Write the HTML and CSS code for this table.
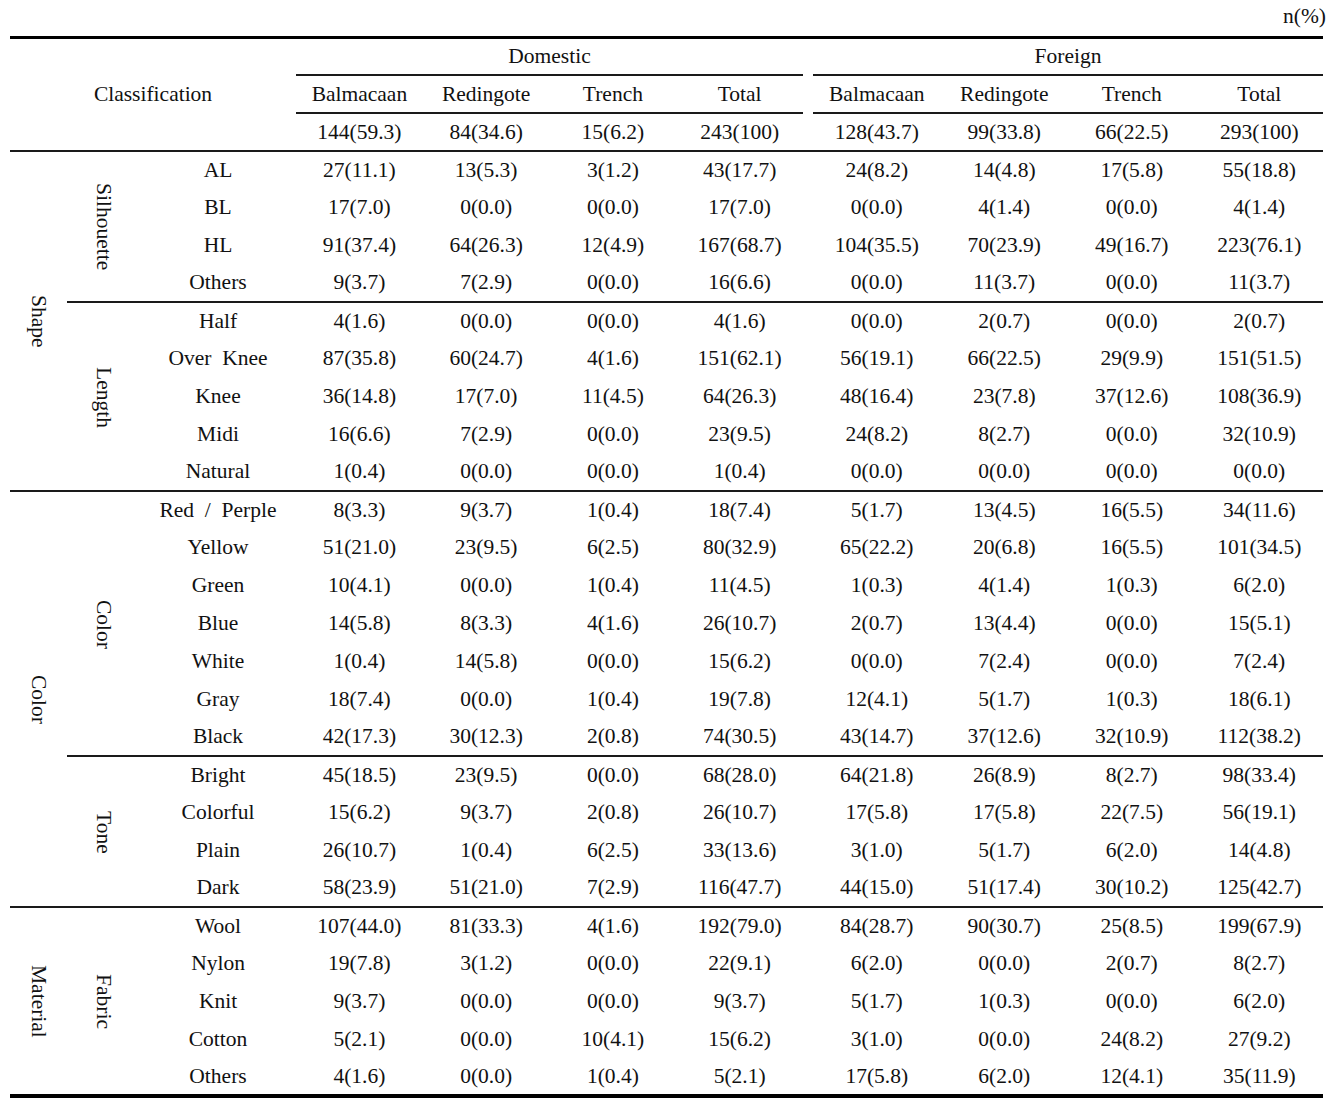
FILE: index.html
```html
<!DOCTYPE html>
<html>
<head>
<meta charset="utf-8">
<link rel="stylesheet" href="styles.css">
</head>
<body>
<div class="unit">n(%)</div>
<table class="tbl">
<colgroup>
<col class="c-grp"><col class="c-sub"><col class="c-item">
<col class="c-d"><col class="c-d"><col class="c-d"><col class="c-d">
<col class="c-gap">
<col class="c-f"><col class="c-f"><col class="c-f"><col class="c-f">
</colgroup>
<thead>
<tr>
<th colspan="3" rowspan="3" class="classif bline">Classification</th>
<th colspan="4" class="hline">Domestic</th>
<th class="gap"></th>
<th colspan="4" class="hline">Foreign</th>
</tr>
<tr>
<th class="hline">Balmacaan</th><th class="hline">Redingote</th><th class="hline">Trench</th><th class="hline">Total</th>
<th class="gap"></th>
<th class="hline">Balmacaan</th><th class="hline">Redingote</th><th class="hline">Trench</th><th class="hline">Total</th>
</tr>
<tr class="sec">
<td>144(59.3)</td><td>84(34.6)</td><td>15(6.2)</td><td>243(100)</td><td></td>
<td>128(43.7)</td><td>99(33.8)</td><td>66(22.5)</td><td>293(100)</td>
</tr>
</thead>
<tbody>
<tr>
<td rowspan="9" class="grp bline"><span class="vt">Shape</span></td>
<td rowspan="4" class="grp bline"><span class="vt">Silhouette</span></td>
<td>AL</td><td>27(11.1)</td><td>13(5.3)</td><td>3(1.2)</td><td>43(17.7)</td><td></td><td>24(8.2)</td><td>14(4.8)</td><td>17(5.8)</td><td>55(18.8)</td></tr>
<tr><td>BL</td><td>17(7.0)</td><td>0(0.0)</td><td>0(0.0)</td><td>17(7.0)</td><td></td><td>0(0.0)</td><td>4(1.4)</td><td>0(0.0)</td><td>4(1.4)</td></tr>
<tr><td>HL</td><td>91(37.4)</td><td>64(26.3)</td><td>12(4.9)</td><td>167(68.7)</td><td></td><td>104(35.5)</td><td>70(23.9)</td><td>49(16.7)</td><td>223(76.1)</td></tr>
<tr class="sec"><td>Others</td><td>9(3.7)</td><td>7(2.9)</td><td>0(0.0)</td><td>16(6.6)</td><td></td><td>0(0.0)</td><td>11(3.7)</td><td>0(0.0)</td><td>11(3.7)</td></tr>
<tr>
<td rowspan="5" class="grp bline"><span class="vt">Length</span></td>
<td>Half</td><td>4(1.6)</td><td>0(0.0)</td><td>0(0.0)</td><td>4(1.6)</td><td></td><td>0(0.0)</td><td>2(0.7)</td><td>0(0.0)</td><td>2(0.7)</td></tr>
<tr><td>Over&nbsp;&nbsp;Knee</td><td>87(35.8)</td><td>60(24.7)</td><td>4(1.6)</td><td>151(62.1)</td><td></td><td>56(19.1)</td><td>66(22.5)</td><td>29(9.9)</td><td>151(51.5)</td></tr>
<tr><td>Knee</td><td>36(14.8)</td><td>17(7.0)</td><td>11(4.5)</td><td>64(26.3)</td><td></td><td>48(16.4)</td><td>23(7.8)</td><td>37(12.6)</td><td>108(36.9)</td></tr>
<tr><td>Midi</td><td>16(6.6)</td><td>7(2.9)</td><td>0(0.0)</td><td>23(9.5)</td><td></td><td>24(8.2)</td><td>8(2.7)</td><td>0(0.0)</td><td>32(10.9)</td></tr>
<tr class="sec"><td>Natural</td><td>1(0.4)</td><td>0(0.0)</td><td>0(0.0)</td><td>1(0.4)</td><td></td><td>0(0.0)</td><td>0(0.0)</td><td>0(0.0)</td><td>0(0.0)</td></tr>
<tr>
<td rowspan="11" class="grp bline"><span class="vt">Color</span></td>
<td rowspan="7" class="grp bline"><span class="vt">Color</span></td>
<td>Red&nbsp;&nbsp;/&nbsp;&nbsp;Perple</td><td>8(3.3)</td><td>9(3.7)</td><td>1(0.4)</td><td>18(7.4)</td><td></td><td>5(1.7)</td><td>13(4.5)</td><td>16(5.5)</td><td>34(11.6)</td></tr>
<tr><td>Yellow</td><td>51(21.0)</td><td>23(9.5)</td><td>6(2.5)</td><td>80(32.9)</td><td></td><td>65(22.2)</td><td>20(6.8)</td><td>16(5.5)</td><td>101(34.5)</td></tr>
<tr><td>Green</td><td>10(4.1)</td><td>0(0.0)</td><td>1(0.4)</td><td>11(4.5)</td><td></td><td>1(0.3)</td><td>4(1.4)</td><td>1(0.3)</td><td>6(2.0)</td></tr>
<tr><td>Blue</td><td>14(5.8)</td><td>8(3.3)</td><td>4(1.6)</td><td>26(10.7)</td><td></td><td>2(0.7)</td><td>13(4.4)</td><td>0(0.0)</td><td>15(5.1)</td></tr>
<tr><td>White</td><td>1(0.4)</td><td>14(5.8)</td><td>0(0.0)</td><td>15(6.2)</td><td></td><td>0(0.0)</td><td>7(2.4)</td><td>0(0.0)</td><td>7(2.4)</td></tr>
<tr><td>Gray</td><td>18(7.4)</td><td>0(0.0)</td><td>1(0.4)</td><td>19(7.8)</td><td></td><td>12(4.1)</td><td>5(1.7)</td><td>1(0.3)</td><td>18(6.1)</td></tr>
<tr class="sec"><td>Black</td><td>42(17.3)</td><td>30(12.3)</td><td>2(0.8)</td><td>74(30.5)</td><td></td><td>43(14.7)</td><td>37(12.6)</td><td>32(10.9)</td><td>112(38.2)</td></tr>
<tr>
<td rowspan="4" class="grp bline"><span class="vt">Tone</span></td>
<td>Bright</td><td>45(18.5)</td><td>23(9.5)</td><td>0(0.0)</td><td>68(28.0)</td><td></td><td>64(21.8)</td><td>26(8.9)</td><td>8(2.7)</td><td>98(33.4)</td></tr>
<tr><td>Colorful</td><td>15(6.2)</td><td>9(3.7)</td><td>2(0.8)</td><td>26(10.7)</td><td></td><td>17(5.8)</td><td>17(5.8)</td><td>22(7.5)</td><td>56(19.1)</td></tr>
<tr><td>Plain</td><td>26(10.7)</td><td>1(0.4)</td><td>6(2.5)</td><td>33(13.6)</td><td></td><td>3(1.0)</td><td>5(1.7)</td><td>6(2.0)</td><td>14(4.8)</td></tr>
<tr class="sec"><td>Dark</td><td>58(23.9)</td><td>51(21.0)</td><td>7(2.9)</td><td>116(47.7)</td><td></td><td>44(15.0)</td><td>51(17.4)</td><td>30(10.2)</td><td>125(42.7)</td></tr>
<tr>
<td rowspan="5" class="grp"><span class="vt">Material</span></td>
<td rowspan="5" class="grp"><span class="vt">Fabric</span></td>
<td>Wool</td><td>107(44.0)</td><td>81(33.3)</td><td>4(1.6)</td><td>192(79.0)</td><td></td><td>84(28.7)</td><td>90(30.7)</td><td>25(8.5)</td><td>199(67.9)</td></tr>
<tr><td>Nylon</td><td>19(7.8)</td><td>3(1.2)</td><td>0(0.0)</td><td>22(9.1)</td><td></td><td>6(2.0)</td><td>0(0.0)</td><td>2(0.7)</td><td>8(2.7)</td></tr>
<tr><td>Knit</td><td>9(3.7)</td><td>0(0.0)</td><td>0(0.0)</td><td>9(3.7)</td><td></td><td>5(1.7)</td><td>1(0.3)</td><td>0(0.0)</td><td>6(2.0)</td></tr>
<tr><td>Cotton</td><td>5(2.1)</td><td>0(0.0)</td><td>10(4.1)</td><td>15(6.2)</td><td></td><td>3(1.0)</td><td>0(0.0)</td><td>24(8.2)</td><td>27(9.2)</td></tr>
<tr><td>Others</td><td>4(1.6)</td><td>0(0.0)</td><td>1(0.4)</td><td>5(2.1)</td><td></td><td>17(5.8)</td><td>6(2.0)</td><td>12(4.1)</td><td>35(11.9)</td></tr>
</tbody>
</table>
</body>
</html>
```
FILE: styles.css
```css
html, body {
  margin: 0;
  padding: 0;
  background: #fff;
}
body {
  font-family: "Liberation Serif", "Times New Roman", serif;
  font-size: 21.5px;
  color: #111;
}
.unit {
  height: 36px;
  box-sizing: border-box;
  text-align: right;
  padding: 3px 3px 0 0;
  line-height: 26px;
}
.tbl {
  margin-left: 10px;
  width: 1313px;
  table-layout: fixed;
  border-collapse: collapse;
  border-top: 3px solid #000;
  border-bottom: 4px solid #000;
}
.c-grp { width: 57px; }
.c-sub { width: 73px; }
.c-item { width: 156px; }
.c-d { width: 126.75px; }
.c-gap { width: 10px; }
.c-f { width: 127.5px; }
.tbl th, .tbl td {
  box-sizing: border-box;
  padding: 0 0 1px 0;
  height: 37.82px;
  line-height: 24px;
  text-align: center;
  vertical-align: middle;
  font-weight: normal;
  white-space: nowrap;
}
.hline {
  border-bottom: 2px solid #1a1a1a;
}
.tbl tr.sec td, .bline {
  border-bottom: 2px solid #1a1a1a;
}
.tbl td.grp {
  padding: 6px 0 0 0;
}
.vt {
  display: inline-block;
  writing-mode: vertical-rl;
  line-height: 24px;
}
```
